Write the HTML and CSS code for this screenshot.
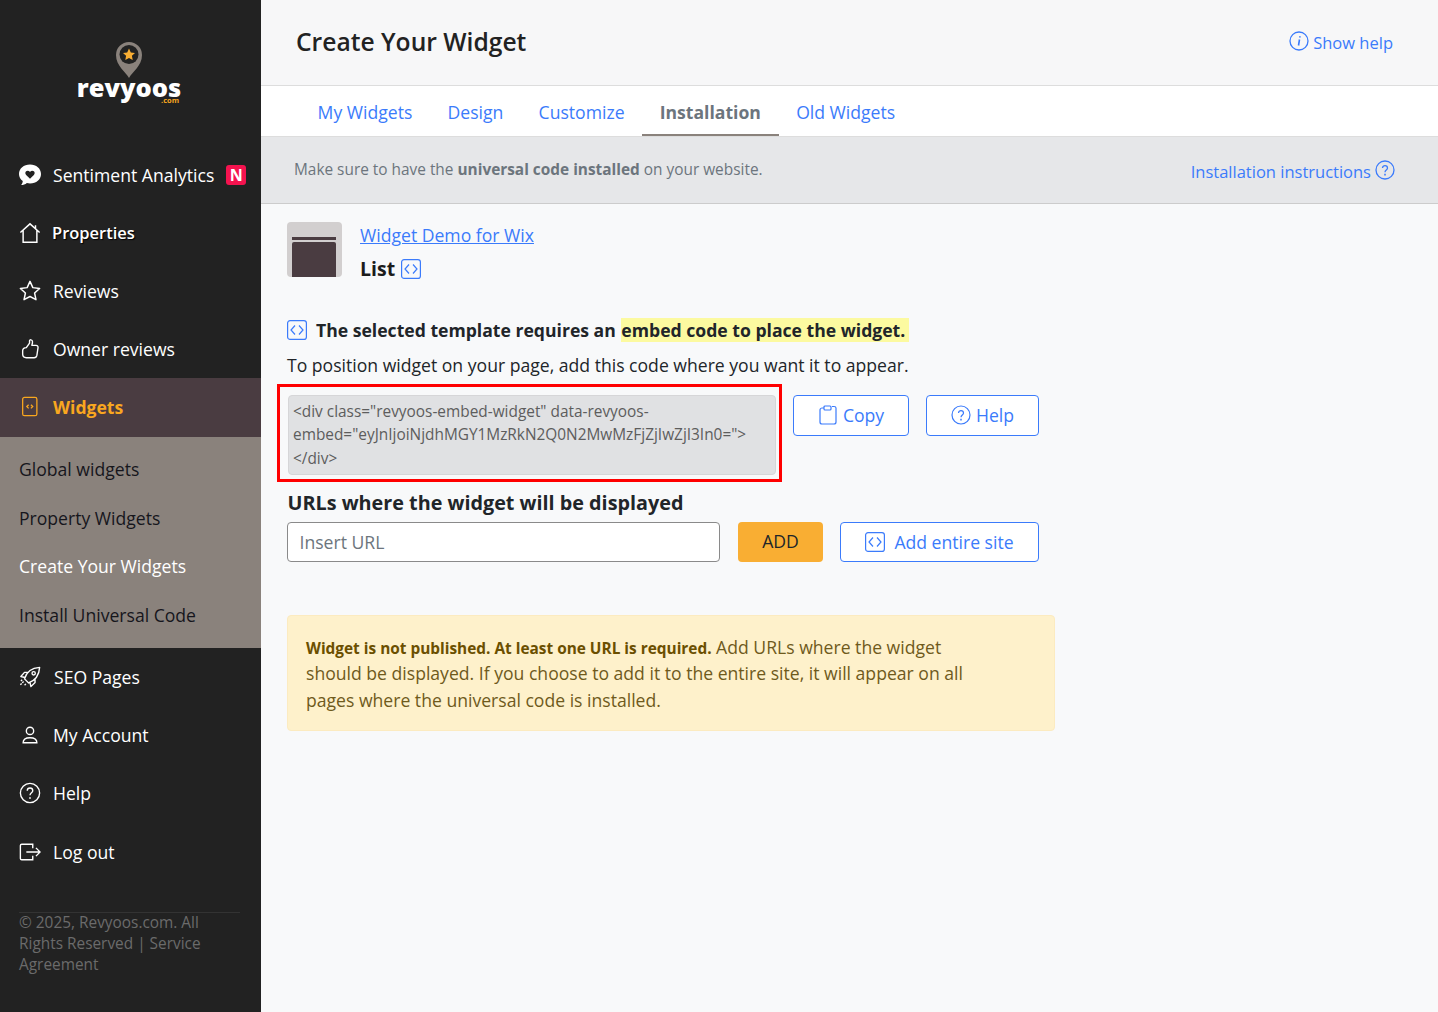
FILE: index.html
```html
<!DOCTYPE html>
<html lang="en">
<head>
<meta charset="utf-8">
<title>Create Your Widget</title>
<link rel="stylesheet" href="styles.css">
</head>
<body>
<div class="app">
  <aside class="sidebar">
    <div class="logo">
      <svg class="pin" width="28" height="37" viewBox="0 0 28 37"><path d="M14 37C11 31 1 25 1 14a13 13 0 0 1 26 0C27 25 17 31 14 37z" fill="#8a827c"/><circle cx="14" cy="13.500" r="9.500" fill="#222"/><path d="M14 7.500l1.800 3.900 4.200.5-3.100 2.900.8 4.200-3.700-2.100-3.700 2.100.8-4.200L8 11.900l4.200-.5z" fill="#f9ae33"/></svg>
      <div class="wordmark">revyoos</div>
      <div class="dotcom">.com</div>
    </div>
    <nav class="nav">
      <a class="nav-item"><svg class="ico" viewBox="1.500 2 21 21"><path d="M12 2.500c6 0 10.500 3.800 10.500 9s-4.500 9-10.500 9c-1 0-2-.1-3-.4-1.500 1.300-3.500 2-5.500 2 .9-1 1.500-2.300 1.600-3.800C2.900 16.700 1.500 14.300 1.500 11.500c0-5.200 4.500-9 10.500-9z" fill="#fff"/><path d="M12 16l-3.700-3.600c-1-1-1-2.500 0-3.400s2.500-.8 3.300.1l.4.500.4-.5c.8-.9 2.300-1 3.300-.1s1 2.400 0 3.400z" fill="#222"/></svg><span>Sentiment Analytics</span><b class="badge">N</b></a>
      <a class="nav-item props"><svg class="ico" viewBox="0 0 24 24" fill="none" stroke="#fff" stroke-width="1.600"><path d="M1.500 11.500L12 2l10.500 9.500M4.500 9v13h15V9M18 3.500v4"/></svg><span>Properties</span></a>
      <a class="nav-item"><svg class="ico" viewBox="0 0 24 24" fill="none" stroke="#fff" stroke-width="1.600" stroke-linejoin="round"><path d="M12 1.500l3.100 6.800 7.400.9-5.500 5 1.500 7.300L12 18l-6.500 3.500L7 14.200l-5.500-5 7.400-.9z"/></svg><span>Reviews</span></a>
      <a class="nav-item"><svg class="ico" viewBox="0 0 24 24" fill="none" stroke="#fff" stroke-width="1.500" stroke-linejoin="round"><path d="M8 10.500l3.500-5V3c0-1.500 3-1.500 3.200.8.200 1.700-.7 4.200-.7 4.200h4.500c2 0 2.500 1.700 2.200 3l-1.200 8c-.3 1.500-1.500 2.500-3 2.500H8c-2.500 0-4-1.500-4-4v-3.500c0-1.800 1.500-3.500 4-3.500z"/></svg><span>Owner reviews</span></a>
      <a class="nav-item active"><svg class="ico" viewBox="0 0 24 24" fill="none" stroke="#f9a71f" stroke-width="1.400"><rect x="4" y="1.500" width="15.500" height="20" rx="2"/><path d="M10.500 9.500L8.500 11.500l2 2M13 9.500l2 2-2 2"/></svg><span>Widgets</span></a>
      <div class="subnav">
        <a class="sub-item">Global widgets</a>
        <a class="sub-item">Property Widgets</a>
        <a class="sub-item current">Create Your Widgets</a>
        <a class="sub-item">Install Universal Code</a>
      </div>
      <a class="nav-item"><svg class="ico" viewBox="0 0 24 24" fill="none" stroke="#fff" stroke-width="1.500" stroke-linejoin="round"><path d="M8.500 16.500L6 14C8 7 14 2 22.500 1.500 22 10 17 16 10.500 18.500zM6.500 12.500L2 11.500 6 7h4.500M12 18l1 4.500 4.500-4.500v-4.500"/><circle cx="16" cy="8" r="1.800"/><path d="M5 17l-3.500 3.500M7.500 19.500L6 21M3.500 15L1.500 17" stroke-dasharray="2 1"/></svg><span class="seo">SEO Pages</span></a>
      <a class="nav-item"><svg class="ico" viewBox="0 0 24 24" fill="none" stroke="#fff" stroke-width="1.500"><circle cx="12" cy="7.500" r="4"/><path d="M4.500 20.500c0-3.500 3-5.500 7.500-5.500s7.500 2 7.500 5.500z"/></svg><span>My Account</span></a>
      <a class="nav-item"><svg class="ico" viewBox="0 0 24 24" fill="none" stroke="#fff" stroke-width="1.500"><circle cx="12" cy="12" r="10.500"/><path d="M9 9.500c0-4 6-4 6 0 0 2.300-3 2.300-3 5"/><path d="M12 16.500v1.800" stroke-width="1.800"/></svg><span>Help</span></a>
      <a class="nav-item"><svg class="ico" viewBox="0 0 24 24" fill="none" stroke="#fff" stroke-width="1.500"><path d="M15 8V3.500H3C2 3.500 1.500 4 1.500 5v14c0 1 .5 1.500 1.500 1.500h12V16M8 12h15M18.500 7.500L23 12l-4.500 4.500"/></svg><span>Log out</span></a>
    </nav>
    <div class="copyright"><div class="copyright-text">© 2025, Revyoos.com. All Rights Reserved | Service Agreement</div></div>
  </aside>
  <main class="main">
    <header class="topbar">
      <h1 class="title">Create Your Widget</h1>
      <a class="show-help"><svg class="ico-help" viewBox="0 0 20 20" fill="none" stroke="#3b7bfb" stroke-width="1.300"><circle cx="10" cy="10" r="9"/><path d="M10.500 8.500L9.500 14.500" stroke-width="1.600"/><path d="M10.900 5.200v1.400" stroke-width="1.700"/></svg>Show help</a>
    </header>
    <div class="tabs">
      <a class="tab">My Widgets</a>
      <a class="tab">Design</a>
      <a class="tab">Customize</a>
      <a class="tab selected">Installation</a>
      <a class="tab">Old Widgets</a>
    </div>
    <div class="notice">
      <p>Make sure to have the <b>universal code installed</b> on your website.</p>
      <a class="inst-link">Installation instructions<svg class="ico-help" viewBox="0 0 20 20" fill="none" stroke="#3b7bfb" stroke-width="1.300"><circle cx="10" cy="10" r="9"/><path d="M7.500 8c0-3.300 5-3.300 5 0 0 2-2.500 2-2.500 4.200"/><path d="M10 13.800v1.600" stroke-width="1.600"/></svg></a>
    </div>
    <section class="content">
      <div class="widget-head">
        <div class="thumb"><div class="thumb-line"></div><div class="thumb-body"></div></div>
        <div class="widget-meta">
          <a class="widget-name">Widget Demo for Wix</a>
          <div class="widget-type">List <svg class="code-ico" viewBox="0 0 20 20" fill="none" stroke="#3b7bfb" stroke-width="1.200"><rect x=".6" y=".6" width="18.800" height="18.800" rx="2.500"/><path d="M8 5.500L4 10l4 4.500M12 5.500l4 4.500-4 4.500"/></svg></div>
        </div>
      </div>
      <div class="req"><svg class="code-ico" viewBox="0 0 20 20" fill="none" stroke="#3b7bfb" stroke-width="1.200"><rect x=".6" y=".6" width="18.800" height="18.800" rx="2.500"/><path d="M8 5.500L4 10l4 4.500M12 5.500l4 4.500-4 4.500"/></svg><span>The selected template requires an <mark>embed code to place the widget.</mark></span></div>
      <p class="position">To position widget on your page, add this code where you want it to appear.</p>
      <div class="code-row">
        <div class="code-frame"><div class="code-box">&lt;div class="revyoos-embed-widget" data-revyoos-embed="eyJnIjoiNjdhMGY1MzRkN2Q0N2MwMzFjZjIwZjI3In0="&gt;&lt;/div&gt;</div></div>
        <a class="btn copy"><svg class="btn-ico" viewBox="0 0 18 20" fill="none" stroke="#3b7bfb" stroke-width="1.200"><path d="M5 3H3C2 3 1 4 1 5v12c0 1 1 2 2 2h12c1 0 2-1 2-2V3c0-1-1-1.500-2-1.500h-2"/><rect x="5" y="1" width="7" height="4" rx="1"/></svg>Copy</a>
        <a class="btn help"><svg class="btn-ico" viewBox="0 0 20 20" fill="none" stroke="#3b7bfb" stroke-width="1.200"><circle cx="10" cy="10" r="9"/><path d="M7.500 8c0-3.300 5-3.300 5 0 0 2-2.500 2-2.500 4.200"/><path d="M10 13.800v1.600" stroke-width="1.500"/></svg>Help</a>
      </div>
      <h2 class="urls">URLs where the widget will be displayed</h2>
      <div class="url-row">
        <input class="url-input" type="text" placeholder="Insert URL">
        <a class="add">ADD</a>
        <a class="btn entire"><svg class="code-ico" viewBox="0 0 20 20" fill="none" stroke="#3b7bfb" stroke-width="1.200"><rect x=".6" y=".6" width="18.800" height="18.800" rx="2.500"/><path d="M8 5.500L4 10l4 4.500M12 5.500l4 4.500-4 4.500"/></svg>Add entire site</a>
      </div>
      <div class="warning"><b>Widget is not published. At least one URL is required.</b> Add URLs where the widget should be displayed. If you choose to add it to the entire site, it will appear on all pages where the universal code is installed.</div>
    </section>
  </main>
</div>
</body>
</html>
```
FILE: styles.css
```css
* { box-sizing: border-box; }
html, body { margin: 0; height: 100%; }
body { font-family: "Open Sans", "Noto Sans", sans-serif; font-size: 17.6px; color: #212529; background: #f8f9fa; overflow: hidden; }
a { text-decoration: none; }
.app { display: flex; height: 1012px; }

.sidebar { width: 261px; flex: none; background: #222; color: #fff; display: flex; flex-direction: column; }
.logo { height: 146px; padding-top: 41px; display: flex; flex-direction: column; align-items: center; position: relative; }
.pin { display: block; margin-left: -4px; }
.wordmark { font-weight: 800; font-size: 25.500px; line-height: 28px; margin-top: -5px; margin-left: -3px; }
.dotcom { position: absolute; top: 96px; left: 161px; font-size: 7.500px; font-weight: 700; line-height: 9px; color: #f9a71f; }
.nav { display: flex; flex-direction: column; margin-top: -1px; }
.nav-item { height: 58.200px; display: flex; align-items: center; padding: 1px 0 0 19px; color: #fff; gap: 12px; }
.ico { width: 22px; height: 22px; flex: none; }
.props span { font-size: 16.500px; font-weight: 600; margin-left: -1px; text-shadow: 1px 1px 1px #000; }
.seo { margin-left: 1px; }
.badge { width: 20px; height: 20px; background: #f5134f; border-radius: 3px; font-size: 16px; line-height: 20px; text-align: center; font-weight: 700; color: #fff; }
.active { background: #4a3c41; color: #f9a71f; font-weight: 700; height: 59px; padding-top: 0; }
.subnav { background: #8a827c; height: 211px; margin-bottom: -.3px; padding: 8px 19px 8px; display: flex; flex-direction: column; }
.sub-item { height: 48.600px; display: flex; align-items: center; color: #16161c; }
.current { color: #fff; }
.copyright { margin: 32px 21px 0 19px; border-top: 1px solid #333; }
.copyright-text { margin-top: -1px; font-size: 15.400px; line-height: 21px; color: #6b6b6b; }

.main { flex: 1; min-width: 0; display: flex; flex-direction: column; }
.topbar { height: 86px; flex: none; background: #f7f7f8; border-bottom: 1px solid #ddd; display: flex; justify-content: space-between; align-items: center; padding: 0 45px 1px 35px; }
.title { margin: 0; font-size: 24.640px; font-weight: 600; color: #222; line-height: 36px; }
.show-help { display: flex; align-items: center; color: #3b7bfb; font-size: 16.500px; gap: 4px; }
.ico-help { width: 20px; height: 20px; flex: none; margin-top: -3px; }
.tabs { height: 51px; flex: none; background: #fff; border-bottom: 1px solid #ddd; display: flex; padding-left: 39px; align-items: stretch; }
.tab { padding: 4px 17.600px 0; color: #3b7bfb; display: flex; align-items: center; height: 50px; border-bottom: 2px solid transparent; }
.selected { color: #6c757d; font-weight: 700; border-bottom-color: #8a827c; }
.notice { height: 67px; flex: none; background: #e6e7e9; border-bottom: 1px solid #ccc; display: flex; justify-content: space-between; align-items: center; padding: 0 43px 0 33px; }
.notice p { margin: 0 0 1px; font-size: 15.400px; color: #6c757d; }
.notice b { font-weight: 700; }
.inst-link { display: flex; align-items: center; gap: 4px; color: #3b7bfb; font-size: 16.500px; padding-top: 2px; }
.content { padding: 18px 26px; flex: 1; }
.widget-head { display: flex; gap: 18px; height: 72px; }
.thumb { width: 55px; height: 55px; background: #d2cfcf; border-radius: 4px; padding: 15px 6px 0 5px; overflow: hidden; }
.thumb-line { height: 3px; background: #4a3c41; margin-bottom: 2px; }
.thumb-body { height: 40px; background: #4a3c41; border-radius: 2px 2px 0 0; }
.widget-meta { display: flex; flex-direction: column; }
.widget-name { color: #3b7bfb; text-decoration: underline; line-height: 27px; }
.widget-type { font-weight: 700; font-size: 19.500px; line-height: 26px; margin-top: 7px; color: #1c1c1c; display: flex; align-items: center; gap: 6px; }
.code-ico { width: 20px; height: 20px; flex: none; }
.req { margin-top: 24px; display: flex; align-items: center; gap: 9px; font-weight: 700; line-height: 24px; }
.req mark { background: #fcfaa0; color: inherit; padding: 0 4px 0 0; margin-left: 1px; }
.position { margin: 11px 0 8px 0; line-height: 24px; }
.code-row { display: flex; align-items: flex-start; margin-left: -10px; margin-top: -1px; }
.code-frame { width: 505px; height: 98px; border: 3px solid #f00; padding: 8px 3px 4px 8px; flex: none; }
.code-box { height: 100%; background: #e0e1e3; border: 1px solid #d6d6d8; border-radius: 4px; padding: 4px 4px; font-size: 15.400px; line-height: 23.400px; color: #5d5d5d; }
.btn { border: 1px solid #3b7bfb; border-radius: 4px; background: #fff; color: #3b7bfb; display: flex; align-items: center; justify-content: center; height: 41px; }
.btn-ico { width: 20px; height: 20px; flex: none; }
.copy { width: 116px; margin: 11px 0 0 11px; gap: 5px; padding-bottom: 2px; }
.help { width: 113px; margin: 11px 0 0 17px; gap: 5px; padding-bottom: 2px; }
.urls { margin: 6px 0 4px .5px; font-size: 19.800px; font-weight: 700; line-height: 30px; color: #212529; }
.url-row { display: flex; align-items: stretch; height: 40px; }
.url-input { width: 433px; height: 40px; border: 1px solid #8a8a8a; border-radius: 4px; padding: 0 11.500px; font: inherit; background: #fff; }
.url-input::placeholder { color: #6c757d; opacity: 1; }
.add { width: 85px; margin-left: 18px; padding-bottom: 2px; background: #f9ae33; border-radius: 4px; color: #212529; display: flex; align-items: center; justify-content: center; }
.entire { width: 199px; height: 40px; margin-left: 17px; gap: 9px; }
.warning { width: 768px; margin-top: 53px; padding: 18px 85px 17px 18px; background: #fef1cb; border: 1px solid #fcebc0; border-radius: 4px; color: #6f5a1c; line-height: 26.400px; }
.warning b { font-size: 15.400px; line-height: 1; color: #6b4f00; }
```
